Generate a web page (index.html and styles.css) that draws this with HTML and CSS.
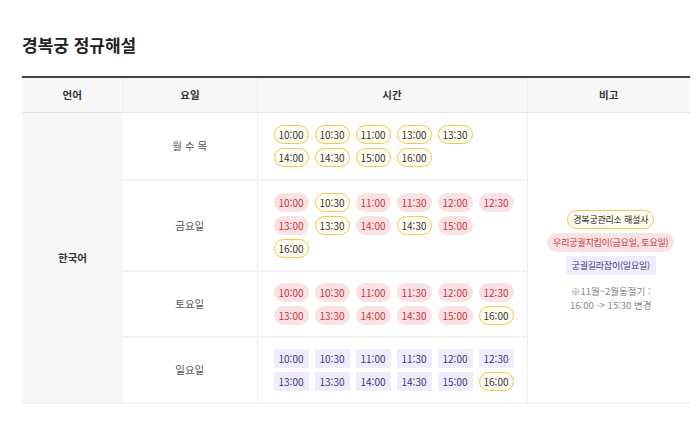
FILE: index.html
```html
<!DOCTYPE html>
<html lang="ko">
<head>
<meta charset="utf-8">
<title>경복궁 정규해설</title>
<link rel="stylesheet" href="styles.css">
</head>
<body>
<div class="page">
  <h2 class="title">경복궁 정규해설</h2>
  <table class="tour">
    <colgroup>
      <col class="c-lang"><col class="c-day"><col class="c-time"><col class="c-note">
    </colgroup>
    <thead>
      <tr><th>언어</th><th>요일</th><th>시간</th><th>비고</th></tr>
    </thead>
    <tbody>
      <tr>
        <th class="lang" rowspan="4">한국어</th>
        <td class="day">월 수 목</td>
        <td class="times">
          <div class="chips"><span class="chip y">10:00</span><span class="chip y">10:30</span><span class="chip y">11:00</span><span class="chip y">13:00</span><span class="chip y">13:30</span></div>
          <div class="chips"><span class="chip y">14:00</span><span class="chip y">14:30</span><span class="chip y">15:00</span><span class="chip y">16:00</span></div>
        </td>
        <td class="note" rowspan="4"><div class="legend">
          <span class="chip y strong">경복궁관리소 해설사</span>
          <span class="chip r">우리궁궐지킴이(금요일, 토요일)</span>
          <span class="chip b">궁궐길라잡이(일요일)</span>
          <p class="remark">※11월~2월동절기 :<br>16:00 -&gt; 15:30 변경</p>
        </div></td>
      </tr>
      <tr>
        <td class="day">금요일</td>
        <td class="times">
          <div class="chips"><span class="chip r">10:00</span><span class="chip y">10:30</span><span class="chip r">11:00</span><span class="chip r">11:30</span><span class="chip r">12:00</span><span class="chip r">12:30</span></div>
          <div class="chips"><span class="chip r">13:00</span><span class="chip y">13:30</span><span class="chip r">14:00</span><span class="chip y">14:30</span><span class="chip r">15:00</span></div>
          <div class="chips"><span class="chip y">16:00</span></div>
        </td>
      </tr>
      <tr>
        <td class="day">토요일</td>
        <td class="times tight">
          <div class="chips"><span class="chip r">10:00</span><span class="chip r">10:30</span><span class="chip r">11:00</span><span class="chip r">11:30</span><span class="chip r">12:00</span><span class="chip r">12:30</span></div>
          <div class="chips"><span class="chip r">13:00</span><span class="chip r">13:30</span><span class="chip r">14:00</span><span class="chip r">14:30</span><span class="chip r">15:00</span><span class="chip y">16:00</span></div>
        </td>
      </tr>
      <tr>
        <td class="day">일요일</td>
        <td class="times tight">
          <div class="chips"><span class="chip b">10:00</span><span class="chip b">10:30</span><span class="chip b">11:00</span><span class="chip b">11:30</span><span class="chip b">12:00</span><span class="chip b">12:30</span></div>
          <div class="chips"><span class="chip b">13:00</span><span class="chip b">13:30</span><span class="chip b">14:00</span><span class="chip b">14:30</span><span class="chip b">15:00</span><span class="chip y">16:00</span></div>
        </td>
      </tr>
    </tbody>
  </table>
</div>
</body>
</html>
```
FILE: styles.css
```css
* { box-sizing: border-box; }
html, body { margin: 0; background: #fff; }
body {
  font-family: "Noto Sans CJK KR", "Noto Sans", sans-serif;
  color: #333;
}
.page { padding: 33px 10px 0 22px; }
.title {
  margin: 0;
  font-size: 17px;
  line-height: 24px;
  font-weight: 700;
  color: #222;
}
.tour {
  margin-top: 19px;
  width: 668px;
  border-collapse: collapse;
  table-layout: fixed;
  border-top: 2px solid #444;
  border-bottom: 2px solid #f2f2f2;
}
.c-lang { width: 101px; }
.c-day { width: 134px; }
.c-time { width: 270px; }
.c-note { width: 163px; }
.tour thead th {
  height: 35px;
  background: #f7f7f7;
  font-size: 10.5px;
  font-weight: 700;
  color: #333;
  border-bottom: 1px solid #e4e4e4;
  border-left: 1px solid #ececec;
  padding: 0;
}
.tour thead th:first-child { border-left: 0; }
.tour tbody td, .tour tbody th {
  padding: 0;
  font-size: 10.5px;
  text-align: center;
  vertical-align: middle;
  border-bottom: 2px solid #f3f3f3;
}
.tour tbody .lang {
  background: #f7f7f7;
  font-weight: 700;
  color: #333;
}
.tour tbody .day {
  color: #555;
  border-right: 1px solid #efefef;
}
.tour tbody .times {
  padding: 12px 4px 12px 16px;
  text-align: left;
}
.tour tbody .times.tight { padding: 11px 4px 11px 16px; }
.tour tbody .note { border-left: 1px solid #efefef; }
.chips {
  display: flex;
  gap: 6px;
}
.chips + .chips { margin-top: 4px; }
.chip {
  display: inline-block;
  height: 19px;
  padding: 0 4px;
  border: 1px solid transparent;
  border-radius: 10px;
  font-size: 10px;
  line-height: 17px;
  white-space: nowrap;
}
.chip.y { border-color: #f2c94c; background: #fffdf1; color: #333; }
.chip.r { background: #f9e2e3; color: #c8323a; }
.chip.b { background: #efedfb; color: #3a3488; border-radius: 1px; }
.legend {
  display: flex;
  flex-direction: column;
  align-items: center;
  gap: 4px;
  padding: 8px 0 0 4px;
}
.legend .chip {
  padding: 0 5px;
  font-size: 9px;
  letter-spacing: -0.2px;
}
.chip.strong { color: #222; }
.remark {
  margin: 5px 0 0;
  font-size: 9.5px;
  line-height: 14px;
  color: #888;
}
```
